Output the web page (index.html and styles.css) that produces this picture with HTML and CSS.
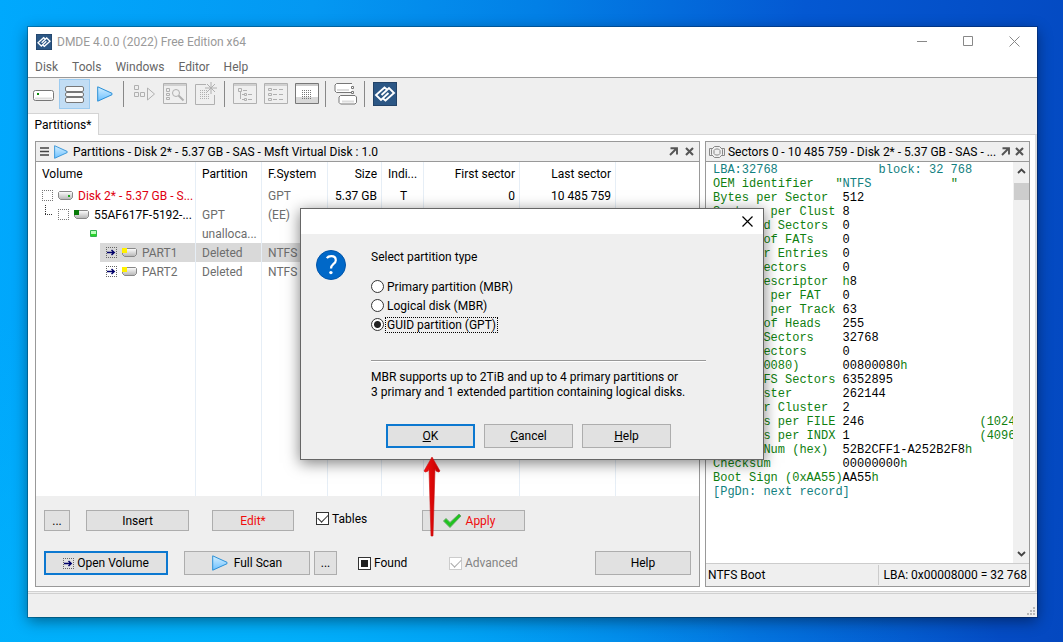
FILE: index.html
```html
<!DOCTYPE html>
<html lang="en">
<head>
<meta charset="utf-8">
<title>DMDE 4.0.0 (2022) Free Edition x64</title>
<link rel="stylesheet" href="styles.css">
</head>
<body>
<svg class="defs" aria-hidden="true">
  <defs>
    <linearGradient id="blue" x1="0" y1="0" x2="0" y2="1"><stop offset="0" stop-color="#d4efff"/><stop offset="1" stop-color="#6cc0ff"/></linearGradient>
    <linearGradient id="metal" x1="0" y1="0" x2="0" y2="1"><stop offset="0" stop-color="#fff"/><stop offset="1" stop-color="#b4b4b4"/></linearGradient>
    <linearGradient id="red" x1="0" y1="0" x2="1" y2="0"><stop offset="0" stop-color="#f60f0f"/><stop offset="1" stop-color="#c00000"/></linearGradient>
  </defs>
  <symbol id="logo" viewBox="0 0 24 24">
    <rect width="24" height="24" fill="#2c5785"/><rect x=".5" y=".5" width="23" height="23" fill="none" stroke="#234368"/>
    <g fill="none" stroke="#fff" stroke-width="1.9"><path d="M14 7.500 11.500 5.500 3 13 8 18 15.500 11"/><path d="M10 16.500 12.500 18.500 21 11 16 6 8.500 13"/></g>
  </symbol>
  <symbol id="play" viewBox="0 0 16 16"><path d="M.7.8 15 7.3v1.4L.7 15.2z" fill="url(#blue)" stroke="#2b8fd6"/></symbol>
  <symbol id="drive" viewBox="0 0 15 9"><path d="M1.500.5h12l1 1v5l-2 2h-10l-2-2v-5z" fill="url(#metal)" stroke="#888"/></symbol>
  <symbol id="dotarrow" viewBox="0 0 11 11"><path d="M0 .5h11M0 10.500h11M.5 0v11M10.500 0v11" stroke="#666" stroke-dasharray="1 1"/><path d="M1 5.500h7M5.500 3 8.200 5.500 5.500 8" fill="none" stroke="#00006a" stroke-width="1.500"/></symbol>
  <symbol id="pin" viewBox="0 0 9 9"><path d="M1.500 1.200H8V7.500M8 1 1 8" fill="none" stroke="#555" stroke-width="1.900"/></symbol>
  <symbol id="cross" viewBox="0 0 9 9"><path d="m1 1 7 7m0-7-7 7" fill="none" stroke="#555" stroke-width="2.100"/></symbol>
</svg>

<main class="window">
  <header class="titlebar">
    <svg class="i16"><use href="#logo"/></svg>
    <h1>DMDE 4.0.0 (2022) Free Edition x64</h1>
    <button aria-label="Minimize"><svg width="11" height="11"><path d="M0 5.500h10" stroke="#888"/></svg></button>
    <button aria-label="Maximize"><svg width="11" height="11"><path d="M.5.5h9v9h-9z" fill="none" stroke="#888"/></svg></button>
    <button aria-label="Close"><svg width="11" height="11"><path d="m.5.5 10 10m0-10-10 10" stroke="#888"/></svg></button>
  </header>
  <nav class="menu"><button>Disk</button><button>Tools</button><button>Windows</button><button>Editor</button><button>Help</button></nav>

  <div class="toolbar" role="toolbar">
    <button aria-label="Disk"><svg width="21" height="24"><rect x=".5" y="8.500" width="20" height="10" rx="2" fill="#fff" stroke="#777"/><path d="M2 16.500h17" stroke="#ddd" stroke-width="2"/><path d="M4 11h2v2H4z" fill="#0a8a0a"/></svg></button>
    <button class="active" aria-label="Partitions"><svg width="19" height="24"><g fill="#fafafa" stroke="#777"><rect x=".5" y="4.500" width="18" height="5" rx="1.500"/><rect x=".5" y="10.500" width="18" height="4" rx="1.500"/><rect x=".5" y="15.500" width="18" height="5" rx="1.500"/></g></svg></button>
    <button aria-label="Full scan"><svg class="i16"><use href="#play"/></svg></button>
    <i class="sep"></i>
    <button aria-label="Find partition"><svg width="21" height="24" fill="none" stroke="#b0b0b0"><path d="M.5 3.500h4v4h-4zM.5 10.500h4v4h-4zM6.500 10.500h4v4h-4zM13.500 6v12l7-6z"/></svg></button>
    <button aria-label="Search"><svg width="24" height="24" fill="none" stroke="#b0b0b0"><path d="M.5 1.500h23v20H.5zM0 3h24M3.500 6.500h3v3h-3zM3.500 11.500h3v2h-3zM3.500 15.500h3v2h-3z"/><circle cx="13" cy="11" r="3.500"/><path d="m15.500 13.500 5 5" stroke-width="2"/></svg></button>
    <button aria-label="New editor"><svg width="22" height="24" fill="none" stroke="#b0b0b0"><path d="M11 2.500H.5v20h19V13M16 0v12M10 6h12M12 2l8 8m0-8-8 8"/><path d="M5 8.500h7M5 10.500h8M5 12.500h10M5 14.500h10M5 16.500h10" stroke-dasharray="1 1"/></svg></button>
    <i class="sep"></i>
    <button aria-label="Tree"><svg width="24" height="24" fill="none" stroke="#b0b0b0"><path d="M.5 1.500h23v20H.5zM0 3h24M5.500 6.500h3v3h-3zM10 8.500h4M7.500 10v7M9 12.500h2M9 17.500h2M11.500 11.500h2v2h-2zM11.500 16.500h2v2h-2zM15 12.500h4M15 17.500h4"/></svg></button>
    <button aria-label="List"><svg width="24" height="24" fill="none" stroke="#b0b0b0"><path d="M.5 1.500h23v20H.5zM0 3h24M4.500 6.500h3v2h-3zM4.500 11.500h3v2h-3zM4.500 16.500h3v2h-3z"/><path d="M9 7.500h10M9 12.500h10M9 17.500h10" stroke-dasharray="4 2"/></svg></button>
    <button aria-label="Hex"><svg width="24" height="24" fill="none" stroke="#777"><path d="M.5 1.500h23v20H.5z" fill="#fff"/><path d="M1 3h22" stroke="#999"/><path d="M1 15h22v6H1z" fill="#d8d8d8" stroke="none"/><path d="M7 8.500h10M7 10.500h10M7 12.500h10M7 14.500h10M7 16.500h10" stroke-dasharray="1 1"/></svg></button>
    <i class="sep"></i>
    <button aria-label="Copy sectors"><svg width="24" height="24" fill="#fff" stroke="#777"><path d="M18 10.500H2.500l-1.500-1.500v-6l1.500-1.500H18M17 13.500H6.500L5 15v5.500l1.500 1.500h14.500l1.500-1.500V15l-1.500-1.500z"/><path d="M3 8h12M8 19.500h12" stroke="#ddd" stroke-width="2"/><path d="M17.500 4.500h2v2h-2zM17.500 9.500h2v2h-2z"/></svg></button>
    <i class="sep"></i>
    <button aria-label="About"><svg class="i24"><use href="#logo"/></svg></button>
  </div>
  <div class="tabs" role="tablist"><button role="tab" aria-selected="true">Partitions*</button></div>

  <div class="workspace">
    <section class="pane partitions">
      <header class="pane-head">
        <svg width="9" height="9"><path d="M0 1h9M0 4.500h9M0 8h9" stroke="#444" stroke-width="1.500"/></svg>
        <svg class="i14"><use href="#play"/></svg>
        <h2>Partitions - Disk 2* - 5.37 GB - SAS - Msft Virtual Disk : 1.0</h2>
        <button aria-label="Detach"><svg class="i9"><use href="#pin"/></svg></button>
        <button aria-label="Close pane"><svg class="i9"><use href="#cross"/></svg></button>
      </header>
      <div class="list">
        <table>
          <colgroup><col class="c-vol"><col class="c-part"><col class="c-part"><col class="c-size"><col class="c-ind"><col class="c-sec"><col class="c-sec"><col></colgroup>
          <thead><tr><th>Volume</th><th>Partition</th><th>F.System</th><th class="num">Size</th><th>Indi...</th><th class="num">First sector</th><th class="num">Last sector</th><th></th></tr></thead>
          <tbody>
            <tr><td><div class="vol modified"><input type="checkbox" class="dotted" aria-label="Select disk"><svg class="drv"><use href="#drive"/><path d="M10 4h2v2h-2z" fill="#1da51d"/></svg>Disk 2* - 5.37 GB - S...</div></td><td></td><td>GPT</td><td class="num dark">5.37 GB</td><td class="mid dark">T</td><td class="num dark">0</td><td class="num dark">10 485 759</td><td></td></tr>
            <tr><td><div class="vol child"><svg class="elbow" width="8" height="19"><path d="M.5 0v9M0 9.500h8" fill="none" stroke="#333" stroke-dasharray="1 1"/></svg><input type="checkbox" class="dotted" aria-label="Select 55AF617F"><svg class="drv"><use href="#drive"/><path d="M0 0h5v5H0z" fill="#087a08"/></svg>55AF617F-5192-...</div></td><td>GPT</td><td>(EE)</td><td></td><td></td><td></td><td></td><td></td></tr>
            <tr><td><div class="vol free"><svg width="7" height="7"><path d="M.5.5h6v6h-6z" fill="#b8ffb8" stroke="#30b050"/><path d="M1 4h5v2H1z" fill="#28d428"/></svg></div></td><td>unalloca...</td><td></td><td></td><td></td><td></td><td></td><td></td></tr>
            <tr class="selected"><td><div class="vol part"><svg class="i11"><use href="#dotarrow"/></svg><svg class="drv"><use href="#drive"/><path d="M0 0h5v5H0z" fill="#fff000"/></svg>PART1</div></td><td>Deleted</td><td>NTFS</td><td></td><td></td><td></td><td></td><td></td></tr>
            <tr><td><div class="vol part"><svg class="i11"><use href="#dotarrow"/></svg><svg class="drv"><use href="#drive"/><path d="M0 0h5v5H0z" fill="#fff000"/></svg>PART2</div></td><td>Deleted</td><td>NTFS</td><td></td><td></td><td></td><td></td><td></td></tr>
            <tr class="rest"><td></td><td></td><td></td><td></td><td></td><td></td><td></td><td></td></tr>
          </tbody>
        </table>
      </div>
      <footer class="actions">
        <div class="row row-a">
          <button class="btn dots">...</button>
          <button class="btn insert">Insert</button>
          <button class="btn edit">Edit*</button>
          <label class="check tables"><input type="checkbox" checked>Tables</label>
          <button class="btn apply"><svg width="20" height="16"><path d="M1.500 8 4 5.500l4 4L17 1l2 2L8 14.500z" fill="#1fc41f" stroke="#65a865"/></svg>Apply</button>
        </div>
        <div class="row row-b">
          <button class="btn default open"><svg class="i11"><use href="#dotarrow"/></svg>Open Volume</button>
          <button class="btn scan"><svg class="i16"><use href="#play"/></svg>Full Scan</button>
          <button class="btn more">...</button>
          <label class="check found"><input type="checkbox" class="mixed" checked>Found</label>
          <label class="check advanced"><input type="checkbox" checked disabled>Advanced</label>
          <button class="btn help">Help</button>
        </div>
      </footer>
    </section>

    <section class="pane sectors">
      <header class="pane-head">
        <svg width="16" height="12" fill="none" stroke="#888"><path d="M3 2.500H.5v7H3M13 2.500h2.500v7H13"/><path d="m5.500.5h5l3 3v5l-3 3h-5l-3-3v-5zM6.500 3h3l1.500 1.500v3L9.500 9h-3L5 7.500v-3z"/></svg>
        <h2>Sectors 0 - 10 485 759 - Disk 2* - 5.37 GB - SAS - ...</h2>
        <button aria-label="Detach"><svg class="i9"><use href="#pin"/></svg></button>
        <button aria-label="Close pane"><svg class="i9"><use href="#cross"/></svg></button>
      </header>
      <div class="dump-area">
<pre class="dump"><span class="teal">LBA:32768              block: 32 768</span>
OEM identifier   "<span class="teal">NTFS           </span>"
Bytes per Sector  <b>512</b>
Sectors per Clust <b>8</b>
Reserved Sectors  <b>0</b>
Number of FATs    <b>0</b>
Root Dir Entries  <b>0</b>
Total Sectors     <b>0</b>
Media Descriptor  h<b>8</b>
Sectors per FAT   <b>0</b>
Sectors per Track <b>63</b>
Number of Heads   <b>255</b>
Hidden Sectors    <b>32768</b>
Total Sectors     <b>0</b>
(0x00800080)      <b>00800080</b>h
Num of FS Sectors <b>6352895</b>
MFT Cluster       <b>262144</b>
MFT Mirr Cluster  <b>2</b>
Clusters per FILE <b>246</b>                (1024
Clusters per INDX <b>1</b>                  (4096
Serial Num (hex)  <b>52B2CFF1-A252B2F8</b>h
Checksum          <b>00000000</b>h
Boot Sign (0xAA55)<b>AA55</b>h
<span class="teal">[PgDn: next record]</span></pre>
        <div class="scroll"><svg width="9" height="6"><path d="m1 5 3.500-3.500L8 5" fill="none" stroke="#444" stroke-width="1.800"/></svg><i class="thumb"></i><svg width="9" height="6"><path d="m1 1 3.500 3.500L8 1" fill="none" stroke="#444" stroke-width="1.800"/></svg></div>
      </div>
      <footer class="pane-status"><span>NTFS Boot</span><span class="lba">LBA: 0x00008000 = 32 768</span></footer>
    </section>
  </div>
  <footer class="statusbar"><svg width="9" height="9" fill="#b8b8b8"><path d="M7 0h2v2H7zM7 3h2v2H7zM4 3h2v2H4zM7 6h2v2H7zM4 6h2v2H4zM1 6h2v2H1z"/></svg></footer>
</main>

<section class="dialog" role="dialog" aria-labelledby="ask">
  <header><button aria-label="Close dialog"><svg width="11" height="11"><path d="m.5.5 10 10m0-10-10 10" stroke="#000" stroke-width="1.200"/></svg></button></header>
  <div class="dialog-body">
    <svg class="question" width="30" height="31"><circle cx="15" cy="16" r="14.500" fill="#0068c8" stroke="#0055aa"/><path d="M10.800 9.200c1-1.500 2.600-2 4.400-2 2.900 0 4.600 1.600 4.600 4 0 3.800-4.800 3.800-4.800 8.300" fill="none" stroke="#fff" stroke-width="2.200"/><circle cx="14.900" cy="23.600" r="1.700" fill="#fff"/></svg>
    <form class="choices">
      <p id="ask">Select partition type</p>
      <label><input type="radio" name="type"><span>Primary partition (MBR)</span></label>
      <label><input type="radio" name="type"><span>Logical disk (MBR)</span></label>
      <label><input type="radio" name="type" checked><span class="focus">GUID partition (GPT)</span></label>
      <hr>
      <p>MBR supports up to 2TiB and up to 4 primary partitions or<br>3 primary and 1 extended partition containing logical disks.</p>
    </form>
  </div>
  <footer><button class="btn default"><u>O</u>K</button><button class="btn"><u>C</u>ancel</button><button class="btn"><u>H</u>elp</button></footer>
</section>
<svg class="pointer" width="18" height="82" aria-hidden="true"><path d="M9 1 17 15q-1 2-4 0l-1-2-2 67H8L6 13l-1 2q-3 2-4 0z" fill="url(#red)" stroke="#c81010" stroke-width=".6"/></svg>
</body>
</html>
```
FILE: styles.css
```css
* { box-sizing: border-box; }
body {
  margin: 0;
  min-height: 100vh;
  padding: 27px 26px 25px 28px;
  display: flex;
  position: relative;
  overflow: hidden;
  font: 12px/16px Roboto, "Noto Sans", sans-serif;
  color: #000;
  background:
    radial-gradient(ellipse 800px 400px at 20% 110%, #00b4fc, #00a0f000),
    linear-gradient(95deg, #00a9fd 0, #0498f2 28%, #0280e6 48%, #0458d2 72%, #0448c0 100%);
}
h1, h2, p { margin: 0; font: inherit; }
button { font: inherit; color: inherit; padding: 0; border: 0; background: none; }
svg { flex: none; display: block; }
.defs { position: absolute; width: 0; height: 0; }
.i9 { width: 9px; height: 9px; }
.i11 { width: 11px; height: 11px; }
.i14 { width: 14px; height: 14px; }
.i16 { width: 16px; height: 16px; }
.i24 { width: 24px; height: 24px; }
.drv { width: 15px; height: 9px; }

.window {
  flex: 1;
  min-width: 0;
  display: flex;
  flex-direction: column;
  background: #efefef;
  box-shadow: 0 0 0 1px #00000040, 0 4px 14px #00000070;
}
.titlebar { display: flex; align-items: center; height: 29px; padding-left: 8px; background: #fff; color: #999; }
.titlebar h1 { flex: 1; padding-left: 5px; }
.titlebar button { width: 46px; height: 29px; display: grid; place-items: center; }
.menu { display: flex; gap: 14px; height: 22px; padding-left: 7px; background: #fff; color: #666; border-bottom: 1px solid #999; }
.toolbar { display: flex; height: 32px; padding-top: 1px; }
.toolbar button { width: 31px; height: 30px; padding-right: 1px; display: grid; place-items: center; }
.toolbar .active { padding: 0; background: #c2ddf4; border: 1px solid #9ccbf0; }
.sep { width: 1px; height: 26px; margin: 2px 5px 0 2px; background: #888; }
.tabs { display: flex; padding-top: 3px; border-bottom: 1px solid #d4d4d4; }
.tabs button { width: 71px; height: 22px; margin-bottom: -1px; background: #fff; border: 1px solid #d4d4d4; border-bottom: 0; border-left: 0; }

.workspace { flex: 1; min-height: 0; display: flex; gap: 5px; padding: 6px 5px 4px 7px; background: #fff; border-right: 2px solid #ddd; border-bottom: 1px solid #d0d0d0; }
.pane { min-width: 0; display: flex; flex-direction: column; border: 1px solid #999; background: #efefef; }
.partitions { flex: 665 1 0; }
.sectors { flex: 324 1 0; }
.pane-head { display: flex; align-items: center; height: 20px; padding: 0 4px; gap: 5px; border-bottom: 1px solid #999; }
.pane-head h2 { flex: 1; min-width: 0; white-space: nowrap; overflow: hidden; }
.pane-head button { display: grid; place-items: center; width: 11px; height: 16px; }
.sectors .pane-head { padding-left: 3px; gap: 3px; }

.list { flex: 1; min-height: 0; background: #fff; }
table { width: 100%; height: 100%; table-layout: fixed; border-collapse: separate; border-spacing: 0; }
.c-vol { width: 160px; }
.c-part { width: 66px; }
.c-size { width: 54px; }
.c-ind { width: 42px; }
.c-sec { width: 96px; }
th, td { padding: 0 4px 0 6px; border-right: 1px solid #e6eef6; font-weight: 400; text-align: left; white-space: nowrap; overflow: hidden; color: #6d6d6d; }
th { height: 24px; color: #000; }
td { height: 19px; }
th:last-child, td:last-child { border-right: 0; }
td:first-child { padding: 0; color: #000; }
.num { text-align: right; }
.mid { text-align: center; }
.dark { color: #000; }
.rest td { height: auto; }
.vol { display: flex; align-items: center; height: 19px; padding-left: 6px; gap: 5px; }
.modified { color: #e00010; }
.child { padding-left: 9px; }
.elbow { align-self: flex-start; }
.free { padding-left: 54px; }
.part { margin-left: 64px; color: #6d6d6d; }
.selected td:not(:first-child), .selected .vol { background: #d9d9d9; }
.selected td:last-child:last-child { background: none; }
.dotted { appearance: none; flex: none; margin: 0; width: 11px; height: 11px; border: 1px dotted #777; }

.actions { padding: 14px 8px 11px; }
.row { display: flex; align-items: center; }
.row-a { height: 21px; margin-bottom: 20px; }
.row-b { height: 24px; }
.btn { display: flex; align-items: center; justify-content: center; height: 100%; background: #e1e1e1; border: 1px solid #adadad; }
.btn.default { border: 2px solid #0c78d0; }
.dots { width: 26px; }
.insert { width: 103px; margin-left: 16px; }
.edit { width: 82px; margin-left: 23px; color: #f00c0c; }
.tables { width: 106px; margin: 0 0 4px 22px; }
.apply { width: 103px; color: #f00c0c; gap: 4px; padding-right: 10px; }
.open { width: 124px; gap: 3px; }
.scan { width: 126px; margin-left: 16px; gap: 6px; }
.more { width: 23px; margin-left: 4px; }
.found { width: 91px; margin-left: 21px; }
.help { width: 96px; margin-left: auto; }
.check { display: flex; align-items: center; gap: 3px; }
.check input { appearance: none; margin: 0; width: 13px; height: 13px; border: 1px solid #333; background: #fff; display: grid; place-items: center; }
.check input::before { content: ""; width: 9px; height: 5px; margin-top: -3px; border: solid #333; border-width: 0 0 1px 1px; transform: rotate(-45deg); }
.check .mixed::before { width: 7px; height: 7px; margin: 0; background: #222; border: 0; transform: none; }
.check input:disabled { border-color: #ccc; }
.check input:disabled::before { border-color: #aaa; }
.advanced { color: #838383; }

.dump-area { flex: 1; min-height: 0; display: flex; background: #fff; }
.dump { flex: 1; min-width: 0; margin: 0; padding: 1px 0 0 7px; overflow: hidden; font: 12px/14px "Liberation Mono", monospace; color: #108010; }
.dump b { font-weight: 400; color: #000; }
.teal { color: #128080; }
.scroll { width: 16px; display: flex; flex-direction: column; align-items: center; padding: 6px 0; background: #f0f0f0; }
.thumb { width: 15px; height: 17px; margin: 9px 0 auto; background: #cdcdcd; }
.pane-status { display: flex; height: 23px; align-items: center; justify-content: space-between; padding: 0 2px; border-top: 1px solid #ccc; }
.lba { padding-left: 4px; line-height: 20px; border-left: 1px solid #ccc; }
.statusbar { display: flex; justify-content: flex-end; align-items: flex-end; height: 24px; margin-top: 1px; padding: 0 2px 1px; border-top: 1px solid #d0d0d0; }

.dialog { position: absolute; left: 300px; top: 208px; width: 464px; background: #efefef; border: 1px solid #666; box-shadow: 0 3px 14px #00000080; }
.dialog header { display: flex; justify-content: flex-end; height: 25px; padding-right: 10px; background: #fff; }
.dialog header button { display: grid; place-items: center; }
.dialog-body { display: flex; gap: 25px; padding: 15px 57px 0 15px; }
.choices { flex: 1; line-height: 15px; white-space: nowrap; }
.choices label { display: flex; align-items: center; gap: 2px; height: 19px; }
.choices #ask { margin-bottom: 12px; line-height: 16px; }
.choices span { padding: 0 1px; border: 1px solid transparent; line-height: 14px; margin-left: -1px; }
.choices .focus { border: 1px dotted #000; }
.choices input { appearance: none; margin: 0; width: 13px; height: 13px; border: 1px solid #333; border-radius: 50%; background: #fff; }
.choices input:checked { background: radial-gradient(circle, #222 3px, #fff 4px); }
.choices hr { height: 2px; margin: 26px 0 8px; border: 0; border-top: 1px solid #999; border-bottom: 1px solid #fff; }
.dialog footer { display: flex; gap: 9px; height: 59px; padding: 24px 0 11px 85px; }
.dialog footer .btn { width: 89px; }
.pointer { position: absolute; left: 423px; top: 456px; }
```
